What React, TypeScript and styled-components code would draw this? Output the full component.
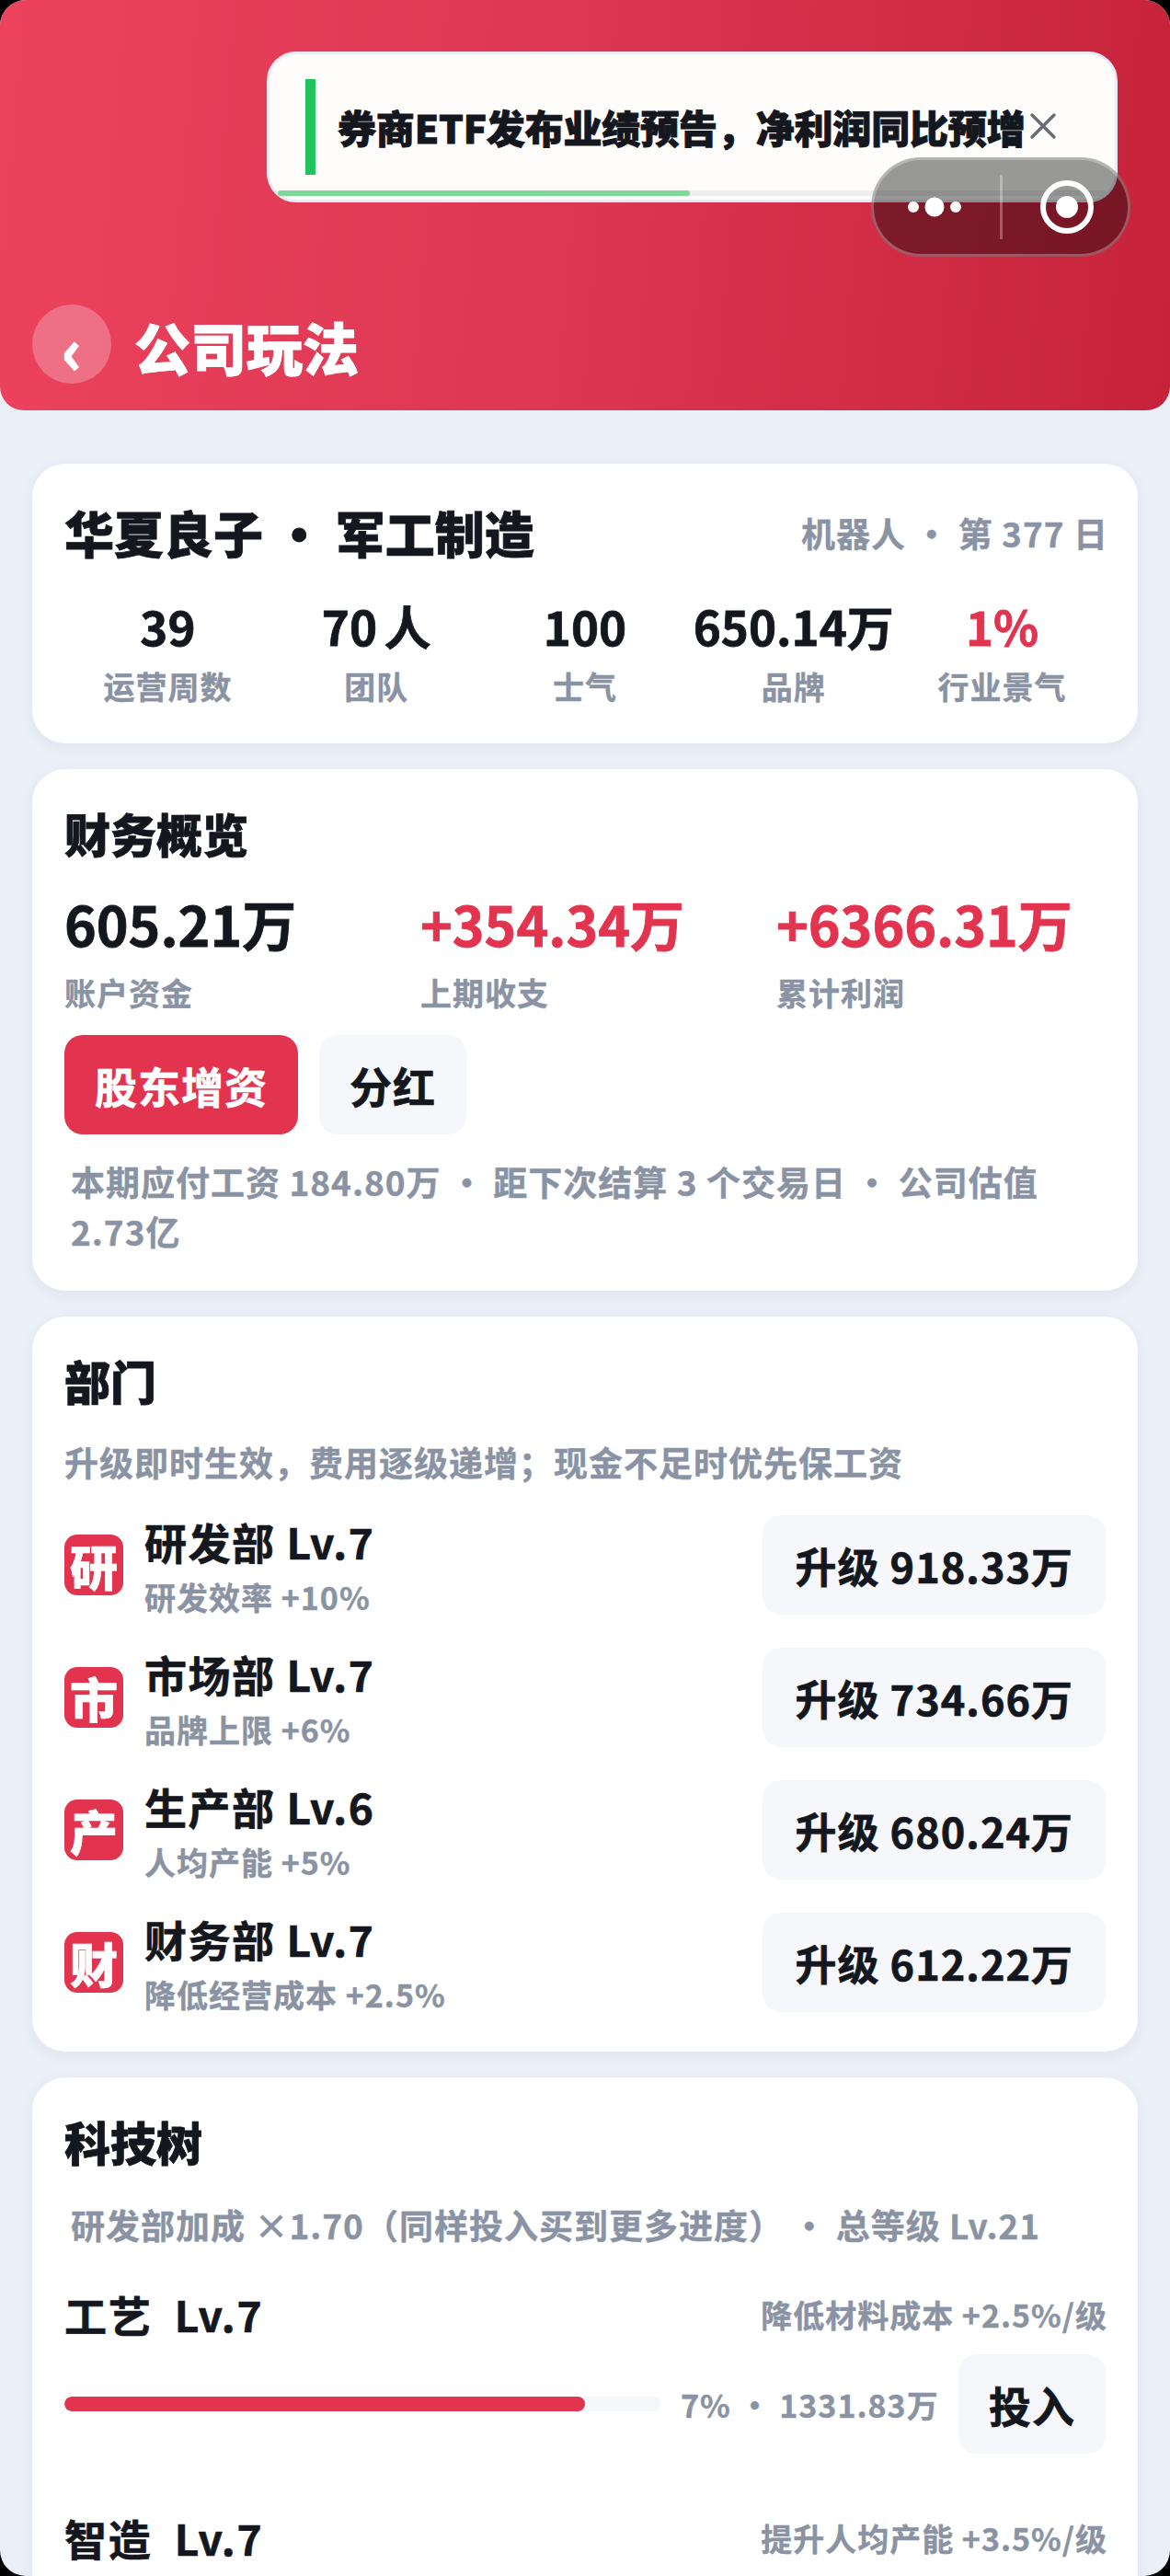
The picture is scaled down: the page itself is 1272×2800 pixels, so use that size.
import React from "react";
import styled, { createGlobalStyle } from "styled-components";

const Global = createGlobalStyle`
  html, body { margin: 0; padding: 0; background: #000; }
  body { font-family: "Noto Sans CJK SC", "Noto Sans", sans-serif; color: #15171e; }
  #root { height: 2800px; overflow: hidden; }
`;

const Page = styled.div`
  position: relative;
  width: 1272px;
  height: 2800px;
  overflow: hidden;
  border-radius: 28px;
  background: #ebeff7;
`;

const Header = styled.header`
  height: 446px;
  box-sizing: border-box;
  padding: 0 35px 29px;
  display: flex;
  align-items: flex-end;
  gap: 25px;
  border-radius: 0 0 26px 26px;
  background: linear-gradient(95deg, #ec425d 0%, #dc3753 48%, #c6233b 100%);
`;

const Back = styled.div`
  width: 86px;
  height: 86px;
  border-radius: 50%;
  background: rgba(255, 255, 255, 0.25);
  display: flex;
  align-items: center;
  justify-content: center;
  color: #fff;
  font-size: 66px;
  font-weight: 700;
  -webkit-text-stroke: 2px #fff;
  line-height: 86px;
  padding-top: 6px;
  box-sizing: border-box;
`;

const HeaderTitle = styled.h1`
  margin: 0 0 -2px;
  color: #fff;
  font-size: 61px;
  line-height: 85px;
  font-weight: 900;
  -webkit-text-stroke: 1px #fff;
`;

const Toast = styled.div`
  position: absolute;
  left: 290px;
  top: 56px;
  width: 925px;
  height: 164px;
  box-sizing: border-box;
  border: 3px solid #e9ebf4;
  border-radius: 32px;
  background: #fefdfc;
  display: flex;
  align-items: center;
  padding: 0 0 2px 39px;
`;

const ToastBar = styled.div`
  width: 11px;
  height: 104px;
  background: #22c35e;
  flex: none;
  margin-top: 2px;
`;

const ToastText = styled.div`
  margin-left: 24px;
  font-size: 42px;
  font-weight: 900;
  letter-spacing: -0.17px;
  -webkit-text-stroke: 1px #15171e;
  white-space: nowrap;
  width: 747px;
  flex: none;
`;

const ToastClose = styled.svg`
  flex: none;
  width: 30px;
  height: 30px;
  margin-left: 5px;
`;

const ToastTrack = styled.div`
  position: absolute;
  left: 9px;
  right: 9px;
  bottom: 4px;
  height: 6px;
  background: #eeeeee;
  border-radius: 3px;
`;

const ToastFill = styled.div`
  height: 100%;
  background: #7fd89c;
  border-radius: 3px;
`;

const Capsule = styled.div`
  position: absolute;
  left: 947px;
  top: 171px;
  width: 282px;
  height: 108px;
  box-sizing: border-box;
  border: 3px solid rgba(255, 255, 255, 0.28);
  border-radius: 54px;
  background: rgba(0, 0, 0, 0.4);
`;

const CapsuleIcons = styled.svg`
  display: block;
  width: 276px;
  height: 102px;
`;

const Main = styled.main`
  padding: 58px 35px 0;
  display: flex;
  flex-direction: column;
  gap: 28px;
`;

const Card = styled.section`
  background: #fff;
  border-radius: 36px;
  padding: 36px 35px;
  box-shadow: 0 4px 16px rgba(30, 45, 90, 0.06);
`;

const CompanyHead = styled.div`
  display: flex;
  justify-content: space-between;
  align-items: center;
`;

const CompanyName = styled.div`
  font-size: 54px;
  line-height: 78px;
  font-weight: 900;
  -webkit-text-stroke: 0.8px #15171e;
  white-space: pre;
`;

const Muted = styled.div`
  color: #8a93a3;
  font-size: 37px;
  letter-spacing: 1px;
  margin-right: -3px;
  font-weight: 700;
  -webkit-text-stroke: 0.4px #8a93a3;
`;

const StatGrid = styled.div`
  display: grid;
  grid-template-columns: repeat(5, 1fr);
  gap: 8px;
  margin-top: 22px;
  padding: 0 3px;
`;

const Stat = styled.div`
  text-align: center;
`;

const StatValue = styled.div<{ $red?: boolean }>`
  font-size: 51px;
  line-height: 80px;
  font-weight: 700;
  white-space: nowrap;
  word-spacing: -4px;
  color: ${(p) => (p.$red ? "#e2334f" : "#15171e")};
  -webkit-text-stroke: 0.8px currentColor;
`;

const StatLabel = styled.div`
  color: #8a93a3;
  font-size: 34px;
  letter-spacing: 1px;
  line-height: 52px;
  font-weight: 700;
  -webkit-text-stroke: 0.4px #8a93a3;
`;

const CardTitle = styled.h2`
  margin: 0;
  font-size: 50px;
  line-height: 66px;
  font-weight: 900;
  -webkit-text-stroke: 0.8px #15171e;
`;

const MoneyGrid = styled.div`
  display: grid;
  grid-template-columns: repeat(3, 1fr);
  gap: 29px;
  margin-top: 25px;
`;

const MoneyValue = styled.div<{ $red?: boolean }>`
  font-size: 59px;
  line-height: 82px;
  font-weight: 700;
  white-space: nowrap;
  color: ${(p) => (p.$red ? "#e2334f" : "#15171e")};
  -webkit-text-stroke: 0.8px currentColor;
`;

const MoneyLabel = styled(StatLabel)`
  margin-top: 9px;
  line-height: 50px;
`;

const ButtonRow = styled.div`
  display: flex;
  gap: 23px;
  margin-top: 21px;
`;

const Button = styled.div<{ $primary?: boolean }>`
  height: 108px;
  box-sizing: border-box;
  padding: 0 33px;
  border-radius: 20px;
  display: flex;
  align-items: center;
  justify-content: center;
  font-size: 46px;
  letter-spacing: 1px;
  font-weight: 700;
  white-space: nowrap;
  flex: none;
  background: ${(p) => (p.$primary ? "#e2334f" : "#f6f7fb")};
  color: ${(p) => (p.$primary ? "#fff" : "#15171e")};
  -webkit-text-stroke: 0.7px currentColor;
`;

const DeptButton = styled(Button)`
  font-size: 45px;
  padding: 0 35px;
`;

const Note = styled.div`
  color: #8a93a3;
  font-size: 37px;
  letter-spacing: 1px;
  line-height: 54px;
  font-weight: 700;
  -webkit-text-stroke: 0.4px #8a93a3;
  padding-left: 7px;
  margin-top: 24px;
  margin-bottom: 2px;
`;

const DeptNote = styled.div`
  color: #8a93a3;
  font-size: 37px;
  letter-spacing: 1px;
  line-height: 56px;
  font-weight: 700;
  -webkit-text-stroke: 0.4px #8a93a3;
  margin-top: 28px;
`;

const DeptList = styled.div`
  display: flex;
  flex-direction: column;
  gap: 22px;
  margin-top: 23px;
`;

const DeptRow = styled.div`
  display: flex;
  align-items: center;
  justify-content: space-between;
  height: 122px;
`;

const DeptLeft = styled.div`
  display: flex;
  align-items: center;
  gap: 23px;
`;

const DeptIcon = styled.div`
  width: 64px;
  height: 66px;
  border-radius: 14px;
  background: #e2334f;
  color: #fff;
  font-size: 52px;
  font-weight: 900;
  -webkit-text-stroke: 0.6px #fff;
  display: flex;
  align-items: center;
  justify-content: center;
`;

const DeptInfo = styled.div`
  margin-bottom: 7px;
`;

const DeptName = styled.div`
  font-size: 46px;
  letter-spacing: 1.5px;
  line-height: 76px;
  font-weight: 700;
  -webkit-text-stroke: 0.7px #15171e;
`;

const DeptSub = styled.div`
  color: #8a93a3;
  font-size: 34px;
  letter-spacing: 1px;
  line-height: 46px;
  font-weight: 700;
  -webkit-text-stroke: 0.4px #8a93a3;
`;

const TechNote = styled(Note)`
  line-height: 56px;
  margin-top: 30px;
  margin-bottom: 0;
`;

const TechItem = styled.div`
  margin-top: 34px;
  margin-bottom: 56px;
`;

const TechHead = styled.div`
  display: flex;
  justify-content: space-between;
  align-items: center;
`;

const TechName = styled.div`
  font-size: 46px;
  letter-spacing: 1.7px;
  line-height: 70px;
  font-weight: 700;
  -webkit-text-stroke: 0.7px #15171e;
  white-space: pre;
`;

const TechEffect = styled.div`
  color: #8a93a3;
  font-size: 34px;
  letter-spacing: 1px;
  margin-right: -2px;
  font-weight: 700;
  -webkit-text-stroke: 0.4px #8a93a3;
`;

const TechBody = styled.div`
  display: flex;
  align-items: center;
  margin-top: 9px;
`;

const Track = styled.div`
  width: 648px;
  height: 16px;
  border-radius: 8px;
  background: #f6f7fb;
  flex: none;
  overflow: hidden;
`;

const Fill = styled.div`
  height: 100%;
  border-radius: 8px;
  background: #e2334f;
`;

const TechStat = styled.div`
  margin-left: 22px;
  color: #8a93a3;
  font-size: 34px;
  letter-spacing: 1px;
  font-weight: 700;
  -webkit-text-stroke: 0.4px #8a93a3;
  white-space: pre;
  flex: 1;
`;

const stats = [
  ["39", "运营周数"],
  ["70 人", "团队"],
  ["100", "士气"],
  ["650.14万", "品牌"],
  ["1%", "行业景气"],
];

const money = [
  ["605.21万", "账户资金", false],
  ["+354.34万", "上期收支", true],
  ["+6366.31万", "累计利润", true],
] as const;

const depts = [
  ["研", "研发部 Lv.7", "研发效率 +10%", "升级 918.33万"],
  ["市", "市场部 Lv.7", "品牌上限 +6%", "升级 734.66万"],
  ["产", "生产部 Lv.6", "人均产能 +5%", "升级 680.24万"],
  ["财", "财务部 Lv.7", "降低经营成本 +2.5%", "升级 612.22万"],
];

const techs: { name: string; effect: string; pct?: number; stat?: string }[] = [
  { name: "工艺  Lv.7", effect: "降低材料成本 +2.5%/级", pct: 87.3, stat: "7% · 1331.83万" },
  { name: "智造  Lv.7", effect: "提升人均产能 +3.5%/级" },
];

export default function App() {
  return (
    <Page>
      <Global />
      <Header>
        <Back>‹</Back>
        <HeaderTitle>公司玩法</HeaderTitle>
      </Header>
      <Toast>
        <ToastBar />
        <ToastText>券商ETF发布业绩预告，净利润同比预增</ToastText>
        <ToastClose viewBox="0 0 30 30">
          <path d="M3 3L27 27M27 3L3 27" stroke="#676c75" strokeWidth="3.5" strokeLinecap="round" fill="none" />
        </ToastClose>
        <ToastTrack>
          <ToastFill style={{ width: "49.7%" }} />
        </ToastTrack>
      </Toast>
      <Capsule>
        <CapsuleIcons viewBox="0 0 276 102">
          <circle cx="43" cy="51" r="6" fill="#fff" />
          <circle cx="66" cy="51" r="10.5" fill="#fff" />
          <circle cx="89" cy="51" r="6" fill="#fff" />
          <rect x="137" y="16" width="3" height="70" fill="rgba(255,255,255,.3)" />
          <circle cx="210" cy="51" r="26" fill="none" stroke="#fff" strokeWidth="6" />
          <circle cx="210" cy="51" r="12" fill="#fff" />
        </CapsuleIcons>
      </Capsule>
      <Main>
        <Card>
          <CompanyHead>
            <CompanyName>华夏良子 · 军工制造</CompanyName>
            <Muted>机器人 · 第 377 日</Muted>
          </CompanyHead>
          <StatGrid>
            {stats.map(([v, l], i) => (
              <Stat key={l}>
                <StatValue $red={i === 4}>{v}</StatValue>
                <StatLabel>{l}</StatLabel>
              </Stat>
            ))}
          </StatGrid>
        </Card>
        <Card>
          <CardTitle>财务概览</CardTitle>
          <MoneyGrid>
            {money.map(([v, l, red]) => (
              <div key={l}>
                <MoneyValue $red={red}>{v}</MoneyValue>
                <MoneyLabel>{l}</MoneyLabel>
              </div>
            ))}
          </MoneyGrid>
          <ButtonRow>
            <Button $primary>股东增资</Button>
            <Button>分红</Button>
          </ButtonRow>
          <Note>本期应付工资 184.80万 · 距下次结算 3 个交易日 · 公司估值 2.73亿</Note>
        </Card>
        <Card>
          <CardTitle>部门</CardTitle>
          <DeptNote>升级即时生效，费用逐级递增；现金不足时优先保工资</DeptNote>
          <DeptList>
            {depts.map(([icon, name, sub, cost]) => (
              <DeptRow key={name}>
                <DeptLeft>
                  <DeptIcon>{icon}</DeptIcon>
                  <DeptInfo>
                    <DeptName>{name}</DeptName>
                    <DeptSub>{sub}</DeptSub>
                  </DeptInfo>
                </DeptLeft>
                <DeptButton>{cost}</DeptButton>
              </DeptRow>
            ))}
          </DeptList>
        </Card>
        <Card>
          <CardTitle>科技树</CardTitle>
          <TechNote>研发部加成 ×1.70（同样投入买到更多进度） · 总等级 Lv.21</TechNote>
          {techs.map(({ name, effect, pct, stat }) => (
            <TechItem key={name}>
              <TechHead>
                <TechName>{name}</TechName>
                <TechEffect>{effect}</TechEffect>
              </TechHead>
              {stat && (
                <TechBody>
                  <Track>
                    <Fill style={{ width: `${pct}%` }} />
                  </Track>
                  <TechStat>{stat}</TechStat>
                  <Button>投入</Button>
                </TechBody>
              )}
            </TechItem>
          ))}
        </Card>
      </Main>
    </Page>
  );
}
